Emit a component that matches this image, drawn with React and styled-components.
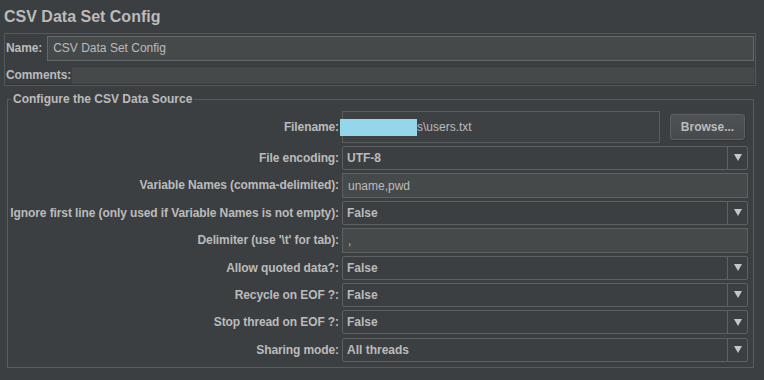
import React from 'react';
import styled, { createGlobalStyle } from 'styled-components';

const GlobalStyle = createGlobalStyle`
  html, body {
    margin: 0;
    padding: 0;
    background: #3c3f41;
  }
  body {
    font-family: "Liberation Sans", Arial, sans-serif;
    font-size: 12px;
    color: #bbbbbb;
  }
`;

const rows = [
  { label: 'File encoding:', kind: 'combo', value: 'UTF-8' },
  { label: 'Variable Names (comma-delimited):', kind: 'text', value: 'uname,pwd' },
  {
    label: 'Ignore first line (only used if Variable Names is not empty):',
    kind: 'combo',
    value: 'False',
  },
  { label: "Delimiter (use '\\t' for tab):", kind: 'text', value: ',' },
  { label: 'Allow quoted data?:', kind: 'combo', value: 'False' },
  { label: 'Recycle on EOF ?:', kind: 'combo', value: 'False' },
  { label: 'Stop thread on EOF ?:', kind: 'combo', value: 'False' },
  { label: 'Sharing mode:', kind: 'combo', value: 'All threads' },
];

function App() {
  return (
    <Page>
      <GlobalStyle />
      <Title>CSV Data Set Config</Title>
      <NamePanel>
        <NameRow>
          <PanelLabel>Name:</PanelLabel>
          <NameField>CSV Data Set Config</NameField>
        </NameRow>
        <CommentsRow>
          <PanelLabel>Comments:</PanelLabel>
          <CommentsField />
        </CommentsRow>
      </NamePanel>
      <Group>
        <Legend>Configure the CSV Data Source</Legend>
        <FormGrid>
          <Label>Filename:</Label>
          <FileRow>
            <FileField>
              <Redacted />
              s\users.txt
            </FileField>
            <BrowseButton>Browse...</BrowseButton>
          </FileRow>
          {rows.map(row => (
            <React.Fragment key={row.label}>
              <Label>{row.label}</Label>
              {row.kind === 'combo' ? (
                <Combo>
                  <ComboValue>{row.value}</ComboValue>
                  <ArrowBox>
                    <Arrow />
                  </ArrowBox>
                </Combo>
              ) : (
                <TextField>{row.value}</TextField>
              )}
            </React.Fragment>
          ))}
        </FormGrid>
      </Group>
    </Page>
  );
}

const Page = styled.div`
  width: 764px;
  height: 380px;
  overflow: hidden;
  background: #3c3f41;
`;

const Title = styled.h1`
  margin: 0;
  height: 33px;
  padding-left: 4px;
  font-size: 16px;
  font-weight: bold;
  line-height: 33px;
  color: #bbbbbb;
`;

const NamePanel = styled.div`
  margin: 0 8px 0 4px;
  border: 1px solid #55585a;
  box-shadow: inset 0 -1px 0 #323436;
`;

const NameRow = styled.div`
  display: flex;
  align-items: center;
  height: 28px;
  padding: 0 1px 0 1px;
`;

const CommentsRow = styled.div`
  display: flex;
  align-items: flex-end;
  height: 22px;
  padding: 0 1px 1px 1px;
`;

const PanelLabel = styled.span`
  font-weight: bold;
  white-space: nowrap;
  letter-spacing: -0.1px;
  margin-right: 5px;
  line-height: 18px;
`;

const NameField = styled.div`
  flex: 1;
  height: 25px;
  margin-top: 1px;
  box-sizing: border-box;
  padding-left: 5px;
  border: 1px solid #656869;
  background: #45494a;
  line-height: 23px;
  color: #bbbbbb;
`;

const CommentsField = styled.div`
  flex: 1;
  height: 18px;
  margin-left: -4px;
  border-top: 1px solid #37393b;
  background: #45494a;
  box-sizing: border-box;
`;

const Group = styled.fieldset`
  margin: 6px 10px 0 7px;
  padding: 6px 5px 5px 2px;
  border: 1px solid #595c5e;
  min-width: 0;
`;

const Legend = styled.legend`
  margin-left: 1px;
  padding: 0 2px;
  font-weight: bold;
  line-height: 14px;
  color: #bbbbbb;
`;

const FormGrid = styled.div`
  display: grid;
  grid-template-columns: 1fr 406px;
  grid-template-rows: 30.6px repeat(8, 24px);
  column-gap: 3px;
  row-gap: 3.4px;
`;

const Label = styled.div`
  display: flex;
  align-items: center;
  justify-content: flex-end;
  font-weight: bold;
  white-space: nowrap;
  letter-spacing: -0.1px;
  color: #bbbbbb;
`;

const FileRow = styled.div`
  display: flex;
  align-items: center;
  gap: 10px;
  padding-right: 3px;
`;

const FileField = styled.div`
  display: flex;
  align-items: center;
  width: 318px;
  height: 32px;
  box-sizing: border-box;
  border: 1px solid #595c5e;
  background: #3e4143;
  color: #bbbbbb;
`;

const Redacted = styled.span`
  display: inline-block;
  width: 77px;
  height: 17px;
  margin-left: -3px;
  background: #95d6ea;
`;

const BrowseButton = styled.button`
  flex: 1;
  height: 26px;
  padding: 0;
  border: 1px solid #5e6163;
  border-radius: 3px;
  background: linear-gradient(#4e5254, #474a4c);
  box-shadow: 1px 1px 0 #333537;
  font-family: inherit;
  font-size: 12px;
  font-weight: bold;
  color: #bbbbbb;
`;

const Combo = styled.div`
  display: flex;
  height: 24px;
  box-sizing: border-box;
  border: 1px solid #5e6163;
  border-radius: 2px;
  background: #3c3f41;
`;

const ComboValue = styled.div`
  flex: 1;
  display: flex;
  align-items: center;
  padding-left: 4px;
  font-weight: bold;
  color: #bbbbbb;
`;

const ArrowBox = styled.div`
  width: 19px;
  display: flex;
  align-items: center;
  justify-content: center;
  border-left: 1px solid #5e6163;
`;

const Arrow = styled.span`
  width: 0;
  height: 0;
  margin-left: 1px;
  border-left: 4px solid transparent;
  border-right: 4px solid transparent;
  border-top: 7px solid #c6c6c6;
`;

const TextField = styled.div`
  display: flex;
  align-items: center;
  height: 25px;
  box-sizing: border-box;
  padding-left: 5px;
  border: 1px solid #5e6163;
  background: #45494a;
  color: #bbbbbb;
`;

export default App;
